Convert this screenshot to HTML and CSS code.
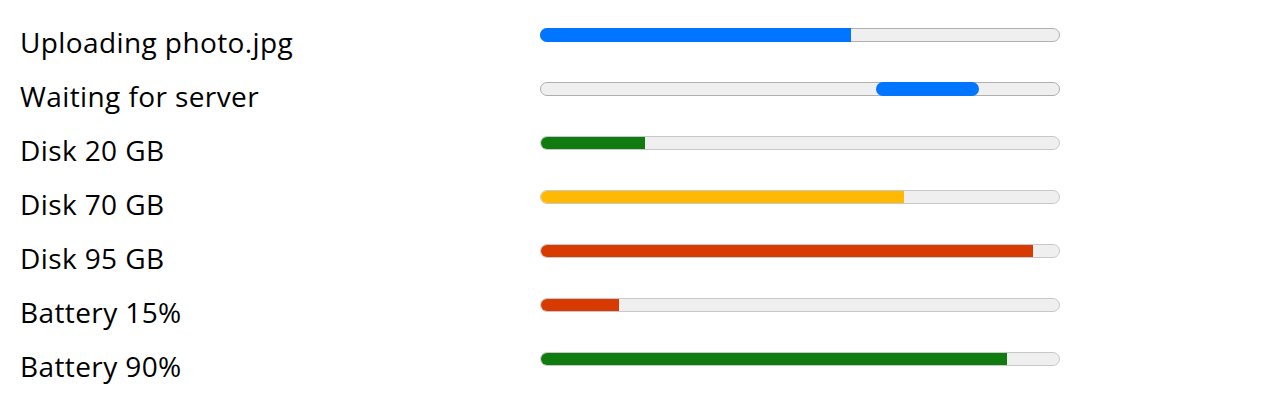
FILE: index.html
```html
<!DOCTYPE html>
<html lang="en">
<head>
<meta charset="utf-8">
<title>Progress</title>
<link rel="stylesheet" href="styles.css">
</head>
<body>
  <div class="list">
    <div class="label">Uploading photo.jpg</div>
    <div class="track accent"><div class="fill" style="width:60%"></div></div>

    <div class="label">Waiting for server</div>
    <div class="track accent"><div class="fill busy"></div></div>

    <div class="label">Disk 20 GB</div>
    <div class="track ok"><div class="fill" style="width:20%"></div></div>

    <div class="label">Disk 70 GB</div>
    <div class="track warn"><div class="fill" style="width:70%"></div></div>

    <div class="label">Disk 95 GB</div>
    <div class="track danger"><div class="fill" style="width:95%"></div></div>

    <div class="label">Battery 15%</div>
    <div class="track danger"><div class="fill" style="width:15%"></div></div>

    <div class="label">Battery 90%</div>
    <div class="track ok"><div class="fill" style="width:90%"></div></div>
  </div>
</body>
</html>
```

FILE: styles.css
```css
html, body {
  margin: 0;
  padding: 0;
  background: #ffffff;
}

body {
  font-family: "Open Sans", "Noto Sans", "Liberation Sans", sans-serif;
  color: #000000;
}

.list {
  display: grid;
  grid-template-columns: 520px 520px;
  grid-auto-rows: 54px;
  padding: 16px 0 0 20px;
}

.label {
  font-size: 28px;
  letter-spacing: 0.4px;
  line-height: 52px;
  white-space: nowrap;
}

.track {
  align-self: start;
  margin-top: 12px;
  height: 14px;
  box-sizing: border-box;
  border: 1px solid #c8c8c8;
  border-radius: 7px;
  background: #efefef;
  display: flex;
}

.fill {
  height: 100%;
  border-radius: 6px 0 0 6px;
}

/* default accent: fill sits over the border */
.track.accent {
  border-color: #b0b0b0;
}

.track.accent .fill {
  background: #0075ff;
  margin: -1px 0 0 -1px;
  height: calc(100% + 2px);
  border-radius: 7px 0 0 7px;
}

.track.accent .fill.busy {
  margin-left: 335px;
  width: 103px;
  border-radius: 7px;
}

.track.ok .fill {
  background: #107c10;
}

.track.warn .fill {
  background: #ffb900;
}

.track.danger .fill {
  background: #d83b01;
}
```
